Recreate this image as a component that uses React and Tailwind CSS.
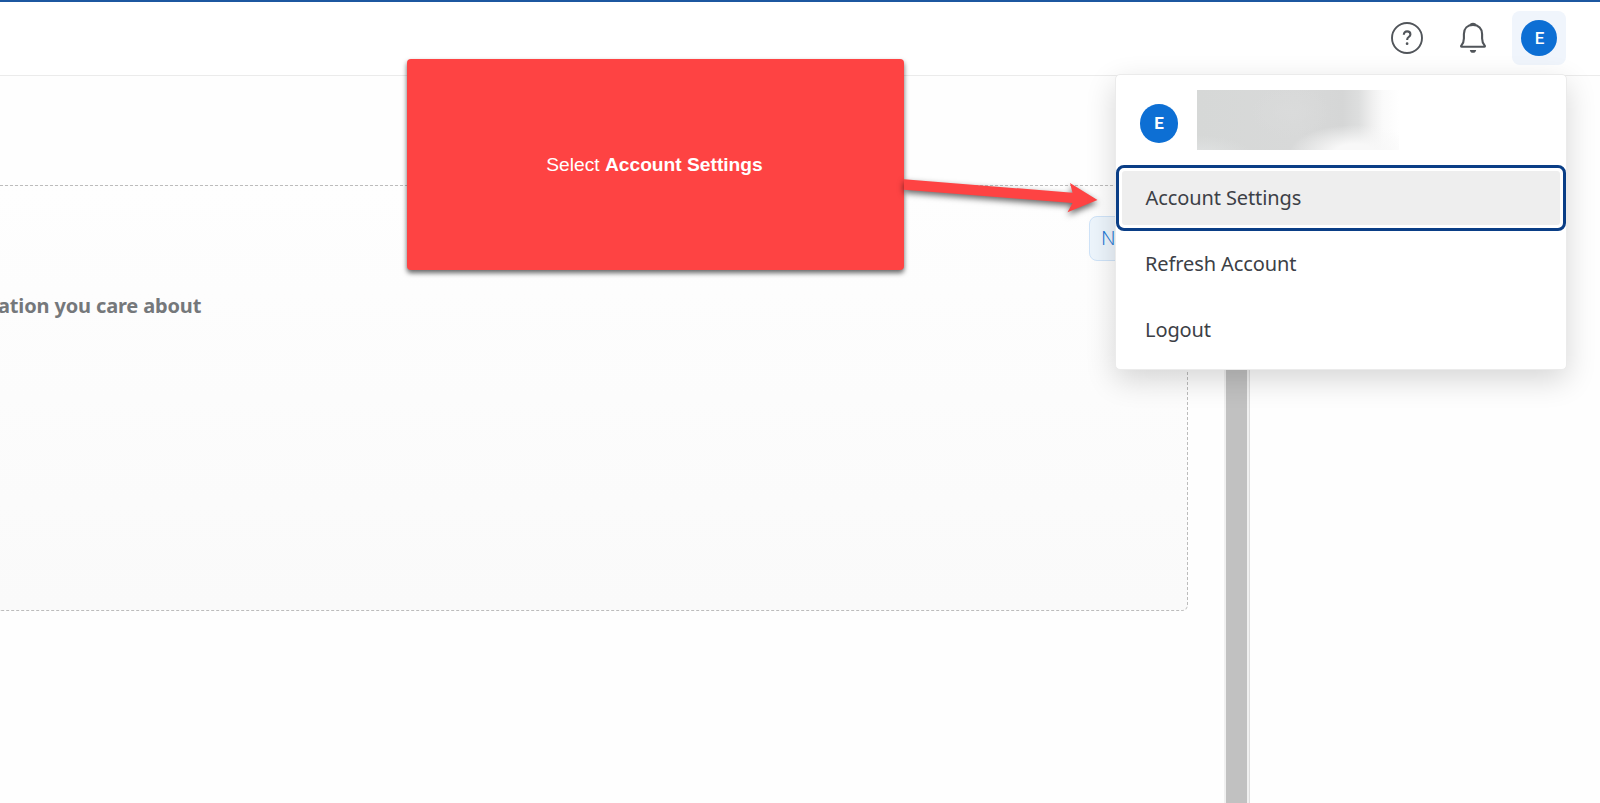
import React from "react";

function HelpIcon() {
  return (
    <svg width="32" height="32" viewBox="0 0 32 32" fill="none" stroke="#51555a">
      <circle cx="16" cy="16" r="15" strokeWidth="1.9" />
      <path d="M12.8 12.7c0-2.1 1.4-3.3 3.3-3.3s3.3 1.2 3.3 3c0 2.5-3.2 2.7-3.2 5v.7" strokeWidth="2.1" />
      <circle cx="16.1" cy="21.7" r="1.35" fill="#51555a" stroke="none" />
    </svg>
  );
}

function BellIcon() {
  return (
    <svg width="28" height="32" viewBox="0 0 28 32" fill="none">
      <path
        d="M14 2.900c-5.6 0-9.100 3.7-9.100 9v4.6c0 3.100-.9 5.100-2.600 7.200-.4.6-.3 1.100.4 1.100h22.600c.7 0 .8-.5.4-1.100-1.700-2.100-2.600-4.100-2.600-7.200v-4.600c0-5.300-3.500-9-9.100-9z"
        stroke="#51555a"
        strokeWidth="2.100"
        strokeLinejoin="round"
      />
      <path d="M10.500 3.200C11 1.600 12.200.8 14 .8s3 .8 3.500 2.400z" fill="#51555a" />
      <path d="M10.800 27.900h6.400c-.4 1.900-1.500 2.900-3.200 2.900s-2.800-1-3.200-2.900z" fill="#51555a" />
    </svg>
  );
}

function Header() {
  return (
    <header className="flex h-[76px] shrink-0 items-start justify-end border-t-2 border-b border-t-[#1c57a0] border-b-[#ebebeb] bg-white pr-[34px]">
      <div className="mt-5 mr-[36px]">
        <HelpIcon />
      </div>
      <div className="mt-5 mr-[25px]">
        <BellIcon />
      </div>
      <div className="mt-[9px] flex size-[54px] items-center justify-center rounded-lg bg-[#f0f5fc]">
        <div className="flex size-9 items-center justify-center rounded-full bg-[#0d6fd4] pt-px pl-px font-[Roboto,sans-serif] text-[17px] font-medium text-white">
          E
        </div>
      </div>
    </header>
  );
}

function AccountMenu() {
  return (
    <div className="absolute top-[74px] left-[1115px] flex h-[296px] w-[452px] flex-col rounded-[5px] border border-[#ebebeb] bg-white shadow-[0_10px_30px_rgba(0,0,0,0.16)]">
      <div className="flex h-[90px] shrink-0 items-start pl-6">
        <div className="mt-[29px] flex h-[39px] w-[38px] items-center justify-center rounded-full bg-[#0d6fd4] font-[Roboto,sans-serif] text-[17px] font-bold text-white">
          E
        </div>
        <div className="mt-[15px] ml-[19px] h-[60px] w-[202px] bg-[radial-gradient(ellipse_65px_27px_at_158px_62px,#f8f8f8_30%,transparent),radial-gradient(ellipse_50px_18px_at_4px_64px,#e0e2e2,transparent),radial-gradient(ellipse_40px_26px_at_94px_22px,#dadbdb,transparent),linear-gradient(90deg,#d6d8d7_0%,#d8d9d9_50%,#d5d6d6_72%,#dddede_80%,#f0f0f0_87%,#fafafa_92%,#fff_100%)]" />
      </div>
      <div className="flex h-[66px] shrink-0 rounded-lg border-[3px] border-[#0a3e86] p-[3px]">
        <div className="flex grow items-center rounded-[3px] bg-[#eeeeee] pl-[23.5px]">Account Settings</div>
      </div>
      <div className="flex h-[66px] shrink-0 items-center pl-[29px]">Refresh Account</div>
      <div className="flex h-[66px] shrink-0 items-center pl-[29px]">Logout</div>
    </div>
  );
}

function Callout() {
  return (
    <>
      <div className="absolute top-[59px] left-[407px] flex h-[211px] w-[497px] items-center justify-center rounded bg-[#fe4343] pt-px font-['Liberation_Sans',sans-serif] text-[19.2px] tracking-normal text-white shadow-[0_3px_5px_rgba(0,0,0,0.6)]">
        <span className="-translate-x-px">
          Select <b>Account Settings</b>
        </span>
      </div>
      <svg className="absolute top-[165px] left-[904px] drop-shadow-[0_3px_3px_rgba(0,0,0,0.6)]" width="200" height="60" viewBox="904 165 200 60">
        <path d="M904 179.200L1072.500 192.700L1070 183L1097.500 200L1067.500 212.200L1072.500 203L904 189.800Z" fill="#fe4343" />
      </svg>
    </>
  );
}

export default function App() {
  return (
    <div className="relative flex h-[803px] w-[1600px] flex-col overflow-hidden bg-[#fefefe] font-['Noto_Sans',sans-serif] text-[20px] tracking-[-0.1px] text-[#3c4046]">
      <Header />
      <main className="flex min-h-0 grow">
        <div className="w-[1224px] shrink-0 pt-[109px] pr-9">
          <section className="flex h-[426px] flex-col items-start rounded-br-md border border-l-0 border-dashed border-[#bcbcbc] bg-linear-to-b from-[#fefefe] to-[#fafafa]">
            <div className="mt-[30px] flex h-[45px] w-[98px] items-center self-end rounded-lg border border-[#cfe3f8] bg-[#edf5fc] pb-px pl-[11px] font-light text-[#1f7ad6]">
              New
            </div>
            <h2 className="mt-[30px] -ml-0.5 font-bold tracking-[-0.15px] text-[#75787b]">ation you care about</h2>
          </section>
        </div>
        <div className="w-[26px] shrink-0 border-r border-r-[#dddddd] bg-[#f0f0f0] pr-0.5 pl-0.5">
          <div className="h-full bg-[#c1c1c1]" />
        </div>
      </main>
      <Callout />
      <AccountMenu />
    </div>
  );
}
